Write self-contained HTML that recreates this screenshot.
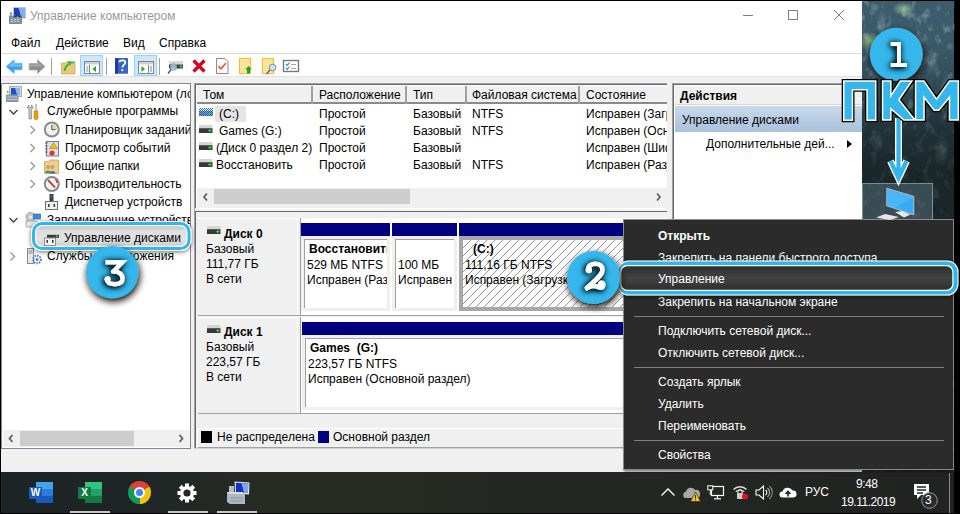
<!DOCTYPE html>
<html><head><meta charset="utf-8">
<style>
*{box-sizing:border-box;margin:0;padding:0}
html,body{width:960px;height:514px;overflow:hidden;background:#000}
body{position:relative;font-family:"Liberation Sans",sans-serif;font-size:12px;color:#000}
.a{position:absolute}
.t{position:absolute;white-space:nowrap;line-height:14px}
.b{font-weight:bold}
#desk{left:1px;top:1px;width:953px;height:472px;background:linear-gradient(180deg,#3d5d6e 0%,#3a5868 10%,#2e4853 19%,#21343a 26%,#1a2629 36%,#1c2729 100%)}
#win{left:1px;top:1px;width:861px;height:471px;background:#fff;overflow:hidden}
#taskbar{left:1px;top:472px;width:953px;height:41px;background:linear-gradient(90deg,#1d2426 0%,#1f2527 12%,#262b23 28%,#242822 55%,#212322 100%)}
#menu{left:623px;top:219px;width:331px;height:251px;background:#2b2b2b;border:1px solid #8a8a8a;color:#fff;box-shadow:1px 2px 2px rgba(0,0,0,.4)}
.panel{position:absolute;background:#fff;border:1px solid #828790;overflow:hidden}
.hdr{position:absolute;top:0;height:18px;background:#f0f0f0;border-right:2px solid #a0a0a0;border-bottom:2px solid #a0a0a0}
.sb{position:absolute;background:#f0f0f0}
.thumb{position:absolute;background:#cdcdcd}
.mi{position:absolute;left:34px;white-space:nowrap;line-height:14px;color:#fff}
.sep{position:absolute;left:10px;width:310px;height:1px;background:#808080}
</style></head><body>
<div id="desk" class="a">
 <div class="a" style="left:861px;top:0;width:92px;height:471px;background:
 radial-gradient(ellipse 12px 7px at 42px 8px,rgba(150,195,140,.9),transparent),
 radial-gradient(ellipse 12px 9px at 8px 40px,rgba(140,185,110,.9),transparent),
 radial-gradient(ellipse 6px 14px at 70px 60px,rgba(150,175,185,.35),transparent),
 radial-gradient(ellipse 5px 12px at 20px 20px,rgba(150,175,185,.35),transparent),
 radial-gradient(ellipse 6px 10px at 85px 85px,rgba(160,190,150,.4),transparent),
 radial-gradient(ellipse 8px 16px at 80px 150px,rgba(110,130,120,.3),transparent),
 radial-gradient(ellipse 8px 12px at 15px 140px,rgba(110,130,120,.25),transparent)"></div>
 <svg class="a" style="left:861px;top:0" width="93" height="471"><defs><filter id="tex" x="0" y="0" width="100%" height="100%"><feTurbulence type="fractalNoise" baseFrequency="0.13 0.09" numOctaves="3" seed="7"/><feColorMatrix type="matrix" values="0 0 0 0 0.75  0 0 0 0 0.85  0 0 0 0 0.8  0 0 0 2.2 -1.15"/></filter><linearGradient id="texfade" x1="0" y1="0" x2="0" y2="1"><stop offset="0" stop-color="#fff" stop-opacity=".5"/><stop offset=".2" stop-color="#fff" stop-opacity=".35"/><stop offset=".32" stop-color="#fff" stop-opacity=".15"/><stop offset=".5" stop-color="#fff" stop-opacity=".12"/></linearGradient><mask id="tm"><rect width="93" height="471" fill="url(#texfade)"/></mask></defs><rect width="93" height="471" filter="url(#tex)" mask="url(#tm)"/></svg>
 <div class="a" style="left:861px;top:182px;width:71px;height:40px;background:rgba(140,175,195,.28);border:1px solid rgba(150,185,205,.6)"></div>
</div>
<div id="win" class="a">
 <!-- title -->
 <svg class="a" style="left:742px;top:9px" width="102" height="12" viewBox="742 9 102 12"><g fill="none" stroke="#808080" stroke-width="1" shape-rendering="crispEdges"><path d="M742 14.5 H752"/><rect x="787.5" y="9.5" width="9" height="9"/></g><path d="M833 9 L843 19 M843 9 L833 19" stroke="#808080" stroke-width="1"/></svg>
 <svg class="a" style="left:8px;top:6px" width="17" height="17" viewBox="0 0 17 17"><rect x="4.5" y="0.5" width="12" height="10.5" fill="#1b3fbf" stroke="#c8c8c0"/><path d="M9.5 1 L16 1 L16 10.5 L12.5 10.5 Z" fill="#7fb2f0"/><rect x="0.5" y="9" width="12" height="7.5" fill="#8796a4" stroke="#6a7884" stroke-width=".8"/><path d="M2 12.5 H11 M2 14.5 H11" stroke="#c8d2da" stroke-width=".9" stroke-dasharray="2 1"/><rect x="1" y="5" width="2" height="4" fill="#aab"/><rect x="1.3" y="6" width="1.3" height="1.2" fill="#3c3"/><path d="M5 10 Q8.5 7.5 12 10" fill="none" stroke="#222" stroke-width="1"/></svg>
 <div class="t" style="left:29px;top:8px;color:#999">Управление компьютером</div>
 <!-- menubar -->
 <div class="t" style="left:10px;top:35px">Файл</div>
 <div class="t" style="left:55px;top:35px">Действие</div>
 <div class="t" style="left:122px;top:35px">Вид</div>
 <div class="t" style="left:158px;top:35px">Справка</div>
 <div class="a" style="left:0;top:52px;width:861px;height:1px;background:#d9d9d9"></div>
 <!-- toolbar highlighted buttons -->
 <div class="a" style="left:79px;top:54px;width:23px;height:21px;background:#cce8ff;border:1px solid #99d1ff"></div>
 <div class="a" style="left:133px;top:54px;width:23px;height:21px;background:#cce8ff;border:1px solid #99d1ff"></div>
 <div class="a" style="left:50px;top:57px;width:1px;height:17px;background:#a0a0a0"></div>
 <div class="a" style="left:105px;top:57px;width:1px;height:17px;background:#a0a0a0"></div>
 <div class="a" style="left:158px;top:57px;width:1px;height:17px;background:#a0a0a0"></div>
 <!-- toolbar icons (abs coords: subtract 1) -->
 <svg class="a" style="left:-1px;top:-1px" width="320" height="80" viewBox="0 0 320 80">
  <!-- back -->
  <path d="M6 66.5 L14.2 59.8 V63.3 H22 V69.8 H14.2 V73.5 Z" fill="#3aa0ec" stroke="#6cc0f5" stroke-width=".8" stroke-linejoin="round"/>
  <path d="M8 66.5 L14.2 61.5 V64.5 H21 V66.5 Z" fill="#8fd0f8" opacity=".7"/>
  <!-- forward -->
  <path d="M45 66.5 L37.5 59.8 V63.5 H29.2 V70 H37.5 V73.5 Z" fill="#8c8c8c" stroke="#a8a8a8" stroke-width=".8" stroke-linejoin="round"/>
  <path d="M43 66.5 L37.5 61.5 V64.5 H30 V66.5 Z" fill="#b4b4b4" opacity=".7"/>
  <!-- folder up -->
  <path d="M61.5 63 H66 L67 61.5 H75 V74 H61.5 Z" fill="#e9c77b" stroke="#c9a55a" stroke-width=".7"/>
  <rect x="70" y="62" width="4" height="1.6" fill="#5aa9e6"/>
  <path d="M63.5 71 C64 67 66 64.5 68.5 63.5 L67 61.5 L72 61.8 L70 66 L69.5 64.8 C67.5 66 66 68.5 65.5 71 Z" fill="#2ec02e"/>
  <!-- window left -->
  <g>
   <rect x="84.5" y="61.5" width="15" height="12" fill="#fff" stroke="#858585" stroke-width="1"/>
   <rect x="85" y="62" width="14" height="2.5" fill="#d0d0d0"/>
   <line x1="89.5" y1="65" x2="89.5" y2="73" stroke="#858585"/>
   <rect x="86.3" y="66.5" width="2" height="1" fill="#4a90d0"/><rect x="86.3" y="68.5" width="2" height="1" fill="#4a90d0"/><rect x="86.3" y="70.5" width="2" height="1" fill="#4a90d0"/>
   <path d="M92.5 69 L96 66 V72 Z" fill="#22a822"/>
  </g>
  <!-- help -->
  <rect x="115" y="58" width="13" height="15.7" fill="#3a63c8"/>
  <rect x="115" y="58" width="3" height="15.7" fill="#1e3c9a"/>
  <path d="M119.3 62.3 C119.3 59.8 125.3 59.8 125.3 62.5 C125.3 64.8 122.3 65 122.3 67.5" fill="none" stroke="#fff" stroke-width="1.8"/>
  <rect x="121.4" y="69.2" width="1.9" height="1.9" fill="#fff"/>
  <!-- window right -->
  <g>
   <rect x="138.5" y="61.5" width="15" height="12" fill="#fff" stroke="#858585" stroke-width="1"/>
   <rect x="139" y="62" width="14" height="2.5" fill="#d0d0d0"/>
   <line x1="148.5" y1="65" x2="148.5" y2="73" stroke="#858585"/>
   <rect x="150" y="66.5" width="2" height="1" fill="#4a90d0"/><rect x="150" y="68.5" width="2" height="1" fill="#4a90d0"/><rect x="150" y="70.5" width="2" height="1" fill="#4a90d0"/>
   <path d="M145 69 L141.5 66 V72 Z" fill="#22a822"/>
  </g>
  <!-- disk magnifier -->
  <rect x="169" y="61" width="14" height="3.5" fill="#d8d8d8"/>
  <rect x="169" y="64.5" width="14" height="4" fill="#3a3a3a"/>
  <path d="M179.5 66.5 H182.5 M181 65 V68" stroke="#2ecc40" stroke-width="1.2"/>
  <circle cx="173.5" cy="67" r="3.3" fill="#b8d4ee" fill-opacity=".8" stroke="#8098b0" stroke-width="1"/>
  <line x1="171" y1="69.5" x2="168" y2="73.5" stroke="#405060" stroke-width="1.3"/>
  <!-- red X -->
  <path d="M193.5 60.5 L204.5 71.5 M204.5 60.5 L193.5 71.5" stroke="#d8001c" stroke-width="3.2"/>
  <!-- doc check -->
  <path d="M216.5 58.5 H225 L228 61.5 V73.5 H216.5 Z" fill="#fafafa" stroke="#8a8a8a" stroke-width="1"/>
  <path d="M218.5 66 L220.8 68.8 L226 63" fill="none" stroke="#f0502a" stroke-width="1.5"/>
  <!-- yellow doc up -->
  <rect x="239.5" y="58.5" width="11" height="15" fill="#fde49b" stroke="#f2c02e" stroke-width="1"/>
  <path d="M248.5 66 L252 69.5 H250 V73.5 H247 V69.5 H245 Z" fill="#1ea51e"/>
  <!-- yellow doc mag -->
  <rect x="262.5" y="58.5" width="11" height="15" fill="#fde49b" stroke="#f2c02e" stroke-width="1"/>
  <circle cx="272.5" cy="67.5" r="3.3" fill="#cfe0f0" stroke="#7a90a6" stroke-width="1"/>
  <line x1="270" y1="70" x2="266.5" y2="74" stroke="#4a6078" stroke-width="1.2"/>
  <!-- checklist -->
  <rect x="283.5" y="60.5" width="15" height="11" fill="#fff" stroke="#7a7a7a" stroke-width="1.4"/>
  <path d="M286 64 L287.3 65.3 L289.5 62.5 M286 68 L287.3 69.3 L289.5 66.5" fill="none" stroke="#2a8ee0" stroke-width="1.1"/>
  <path d="M291 64.5 H296 M291 68.5 H296" stroke="#aaa" stroke-width="1"/>
 </svg>
 <!-- gray body -->
 <div class="a" style="left:0;top:75px;width:861px;height:396px;background:#f0f0f0;border-top:1px solid #e3e3e3"></div>

 <!-- tree panel -->
 <div class="a" style="left:0;top:82px;width:190px;height:366px;background:#fff;border:1px solid #828790;overflow:hidden">
  <div class="t" style="left:25px;top:3px">Управление компьютером (локальным)</div>
  <div class="t" style="left:45px;top:20px">Служебные программы</div>
  <div class="t" style="left:63px;top:39px">Планировщик заданий</div>
  <div class="t" style="left:63px;top:57px">Просмотр событий</div>
  <div class="t" style="left:63px;top:75px">Общие папки</div>
  <div class="t" style="left:63px;top:93px">Производительность</div>
  <div class="t" style="left:63px;top:111px">Диспетчер устройств</div>
  <div class="t" style="left:45px;top:129px">Запоминающие устройства</div>
  <div class="t" style="left:63px;top:147px">Управление дисками</div>
  <div class="t" style="left:45px;top:165px">Службы и приложения</div>
  <svg class="a" style="left:-2px;top:-1px" width="200" height="200" viewBox="0 83 200 200">
   <!-- comp mgmt -->
   <rect x="9.5" y="86.5" width="12" height="10" fill="#d8d8d0" stroke="#b0b0a8" stroke-width="1"/>
   <rect x="11" y="88" width="9" height="7" fill="#1f4fd0"/><path d="M15 88 H20 V95 H17 Z" fill="#8ab8f0"/>
   <rect x="6" y="94.5" width="12.5" height="7.5" fill="#8796a4"/><path d="M7 97 H17.5 M7 99.5 H17.5" stroke="#d0d8e0" stroke-width=".8"/>
   <rect x="7" y="91" width="1.5" height="2" fill="#30d030"/>
   <!-- chevron down -->
   <path d="M9.5 110 L13.5 114 L17.5 110" fill="none" stroke="#404040" stroke-width="1.3"/>
   <!-- tools -->
   <path d="M29 105 C27 106 27 108.5 29 109.5 V119 H31.5 V109.5 C33.5 108.5 33.5 106 31.5 105 V107.5 H29 Z" fill="#c8c8c8" stroke="#808080" stroke-width=".7"/>
   <rect x="35.5" y="104" width="1" height="7" fill="#909090"/>
   <path d="M34.2 111 H37.8 L38 118 C38 120 34 120 34 118 Z" fill="#e8a000" stroke="#b87800" stroke-width=".6"/>
   <!-- chevrons right -->
   <path d="M30.5 126 L34.5 130 L30.5 134 M30.5 144 L34.5 148 L30.5 152 M30.5 162 L34.5 166 L30.5 170 M30.5 180 L34.5 184 L30.5 188" fill="none" stroke="#a0a0a0" stroke-width="1.5"/>
   <!-- clock -->
   <circle cx="51.8" cy="129.5" r="7" fill="#eef2f6" stroke="#8a8a8a" stroke-width="2"/>
   <path d="M51.8 124 A5.7 5.7 0 0 1 57.5 129.7 H51.8 Z" fill="#f0d490"/>
   <path d="M51.8 125 V129.7 H55.5" fill="none" stroke="#505050" stroke-width="1"/>
   <!-- event viewer -->
   <rect x="46.5" y="141.5" width="12" height="14.5" fill="#d8e2f0" stroke="#6a7ea0" stroke-width="1"/>
   <path d="M45 143 H47.5 M45 146 H47.5 M45 149 H47.5 M45 152 H47.5" stroke="#404040" stroke-width=".8"/>
   <path d="M53.5 142.5 L57.5 148.5 H49.5 Z" fill="#f2c000" stroke="#905000" stroke-width=".4"/>
   <circle cx="52" cy="153" r="2.6" fill="#e03030"/>
   <!-- shared folders -->
   <path d="M44.5 161.5 H49 L50 160 H58.5 V173.5 H44.5 Z" fill="#efd08a" stroke="#c8a050" stroke-width=".8"/>
   <circle cx="48" cy="167" r="2" fill="#d09a70"/><path d="M45 173 C45 169.5 51 169.5 51 173 Z" fill="#30a060"/>
   <circle cx="52.5" cy="167" r="2" fill="#d09a70"/><path d="M49.5 173.5 C49.5 170 55.5 170 55.5 173.5 Z" fill="#3070c0"/>
   <!-- performance -->
   <circle cx="51.8" cy="184" r="7" fill="#f4f4f4" stroke="#8a8a8a" stroke-width="2"/>
   <path d="M48 180 L55 187.5" stroke="#d02020" stroke-width="1.8"/>
   <path d="M55.5 179.5 A5 5 0 0 1 57 183" fill="none" stroke="#d02020" stroke-width="1.2"/>
   <!-- device manager -->
   <rect x="49.5" y="194" width="4" height="7" fill="#404040"/><rect x="51" y="195.5" width="1.2" height="1.2" fill="#30d030"/>
   <rect x="45.5" y="201.5" width="12" height="8" fill="#f0f0f0" stroke="#707070" stroke-width="1"/>
   <rect x="48" y="204" width="1.6" height="3" fill="#404040"/><rect x="53.5" y="204" width="1.6" height="3" fill="#404040"/>
   <!-- chevron down storage -->
   <path d="M9.5 218 L13.5 222 L17.5 218" fill="none" stroke="#404040" stroke-width="1.3"/>
   <!-- storage -->
   <circle cx="30.5" cy="217" r="4.6" fill="#c8c8c8" stroke="#909090" stroke-width=".7"/><circle cx="30.5" cy="217" r="1.2" fill="#fff"/>
   <rect x="33.5" y="214" width="7" height="5" fill="#3a8ae0" stroke="#1a5ab0" stroke-width=".6"/>
   <rect x="26" y="221" width="11" height="6" fill="#e8e8e8" stroke="#909090" stroke-width=".7"/>
   <!-- services -->
   <path d="M10.5 252.5 L14.5 256.5 L10.5 260.5" fill="none" stroke="#a0a0a0" stroke-width="1.5"/>
   <rect x="27.5" y="248.5" width="6" height="15" fill="#e8e8e8" stroke="#8a8a8a" stroke-width="1"/>
   <path d="M28.5 251 H32.5 M28.5 253 H32.5" stroke="#707070" stroke-width=".8"/>
   <circle cx="37" cy="259.5" r="3.8" fill="none" stroke="#4a80c8" stroke-width="2" stroke-dasharray="1.5 1"/>
   <circle cx="37" cy="259.5" r="1.5" fill="#4a80c8"/>
  </svg>
  <div class="a" style="left:1px;top:346px;width:187px;height:17px;background:#f0f0f0"></div>
  <svg class="a" style="left:1px;top:346px" width="187" height="17" viewBox="0 0 187 17"><path d="M9.5 5 L6.5 8.5 L9.5 12 M176.5 5 L179.5 8.5 L176.5 12" fill="none" stroke="#606060" stroke-width="1.8"/></svg>
  <div class="a" style="left:18px;top:347px;width:114px;height:15px;background:#cdcdcd"></div>
 </div>
 <!-- center -->
 <div class="a" style="left:193px;top:82px;width:473px;height:366px;background:#f0f0f0;border-left:1px solid #a0a0a0;border-top:1px solid #a0a0a0;overflow:hidden">
  <div class="a" style="left:0;top:0;width:474px;height:124px;background:#fff;border-left:1px solid #696969;border-top:1px solid #696969">
   <div class="a" style="left:1px;top:1px;width:472px;height:18px;background:#f0f0f0;border-bottom:2px solid #8a8a8a"></div>
   <div class="a" style="left:115px;top:1px;width:2px;height:18px;background:#a0a0a0"></div>
   <div class="a" style="left:209px;top:1px;width:2px;height:18px;background:#a0a0a0"></div>
   <div class="a" style="left:269px;top:1px;width:2px;height:18px;background:#a0a0a0"></div>
   <div class="a" style="left:382px;top:1px;width:2px;height:18px;background:#a0a0a0"></div>
   <div class="t" style="left:7px;top:3px">Том</div>
   <div class="t" style="left:123px;top:3px">Расположение</div>
   <div class="t" style="left:217px;top:3px">Тип</div>
   <div class="t" style="left:276px;top:3px">Файловая система</div>
   <div class="t" style="left:390px;top:3px">Состояние</div>
   <div class="a" style="left:19px;top:21px;width:31px;height:16px;background:#e5e5e5"></div>
   <div class="t" style="left:23px;top:22px">(C:)</div>
   <div class="t" style="left:23px;top:39px">Games (G:)</div>
   <div class="t" style="left:20px;top:56px">(Диск 0 раздел 2)</div>
   <div class="t" style="left:20px;top:73px">Восстановить</div>
   <div class="t" style="left:123px;top:22px">Простой</div>
   <div class="t" style="left:123px;top:39px">Простой</div>
   <div class="t" style="left:123px;top:56px">Простой</div>
   <div class="t" style="left:123px;top:73px">Простой</div>
   <div class="t" style="left:217px;top:22px">Базовый</div>
   <div class="t" style="left:217px;top:39px">Базовый</div>
   <div class="t" style="left:217px;top:56px">Базовый</div>
   <div class="t" style="left:217px;top:73px">Базовый</div>
   <div class="t" style="left:276px;top:22px">NTFS</div>
   <div class="t" style="left:276px;top:39px">NTFS</div>
   <div class="t" style="left:276px;top:73px">NTFS</div>
   <div class="t" style="left:390px;top:22px">Исправен (Загрузка, Файл подкачки)</div>
   <div class="t" style="left:390px;top:39px">Исправен (Основной раздел)</div>
   <div class="t" style="left:390px;top:56px">Исправен (Шифрованный (EFI))</div>
   <div class="t" style="left:390px;top:73px">Исправен (Раздел восстановления)</div>
   <svg class="a" style="left:-196px;top:-85px" width="240" height="200" viewBox="0 0 240 200">
    <defs><pattern id="dith" width="2" height="2" patternUnits="userSpaceOnUse"><rect width="1" height="1" fill="#1a6fd8"/><rect x="1" y="1" width="1" height="1" fill="#1a6fd8"/></pattern></defs>
    <rect x="199" y="108" width="14" height="8" fill="url(#dith)"/>
    <rect x="199" y="111" width="14" height="5" fill="#1a4a90" opacity=".5"/>
    <circle cx="209.5" cy="113.5" r="1" fill="#2ecc40"/>
    <g id="drv">
     <rect x="199" y="125" width="13.5" height="3.2" rx=".8" fill="#d6d6d6"/>
     <rect x="199" y="128.2" width="13.5" height="4.8" fill="#383838"/>
     <path d="M208.2 130.6 H211.6 M209.9 128.9 V132.3" stroke="#2ed040" stroke-width="1.1"/>
    </g>
    <use href="#drv" y="17"/>
    <use href="#drv" y="34"/>
   </svg>
   <div class="a" style="left:1px;top:103px;width:472px;height:20px;background:#f0f0f0"></div>
   <svg class="a" style="left:1px;top:103px" width="472" height="20" viewBox="0 0 472 20"><path d="M10 5.5 L7 9 L10 12.5 M460 5.5 L463 9 L460 12.5" fill="none" stroke="#606060" stroke-width="1.8"/></svg>
   <div class="a" style="left:18px;top:104px;width:196px;height:15px;background:#cdcdcd"></div>
   <div class="a" style="left:1px;top:123px;width:472px;height:1px;background:#fff"></div>
  </div>
  <!-- disk panel -->
  <div class="a" style="left:0;top:127px;width:474px;height:238px;background:#f0f0f0;border-left:1px solid #696969;border-top:1px solid #696969">
   <!-- disk 0 -->
   <div class="a" style="left:2px;top:6px;width:100px;height:98px;background:#f0f0f0;border-top:1px solid #fff;border-right:1px solid #fff"></div>
   <div class="t b" style="left:28px;top:15px">Диск 0</div>
   <div class="t" style="left:10px;top:30px">Базовый</div>
   <div class="t" style="left:10px;top:45px">111,77 ГБ</div>
   <div class="t" style="left:10px;top:60px">В сети</div>
   <div class="a" style="left:104px;top:6px;width:370px;height:98px;background:#fff;border-left:1px solid #a0a0a0"></div>
   <div class="a" style="left:105px;top:11px;width:89px;height:13px;background:#000080"></div>
   <div class="a" style="left:196px;top:11px;width:65px;height:13px;background:#000080"></div>
   <div class="a" style="left:263px;top:11px;width:211px;height:13px;background:#000080"></div>
   <div class="a" style="left:105px;top:24px;width:89px;height:75px;background:#fff;border:3px solid #f0f0f0"><div class="a" style="left:0;top:0;width:83px;height:69px;border-left:1px solid #a0a0a0;border-top:1px solid #a0a0a0"></div></div>
   <div class="a" style="left:196px;top:24px;width:65px;height:75px;background:#fff;border:3px solid #f0f0f0"><div class="a" style="left:0;top:0;width:59px;height:69px;border-left:1px solid #a0a0a0;border-top:1px solid #a0a0a0"></div></div>
   <div class="a" style="left:263px;top:24px;width:211px;height:75px;background:#a8a8a8;padding:4px"><svg width="207" height="67" style="display:block"><defs><pattern id="hatch" width="8" height="8" patternUnits="userSpaceOnUse"><path d="M-1 9 L9 -1 M-5 5 L5 -5 M3 13 L13 3" stroke="#8c8c8c" stroke-width=".9"/></pattern></defs><rect width="207" height="67" fill="#fff"/><rect width="207" height="67" fill="url(#hatch)"/></svg></div>
   <div class="a" style="left:109px;top:28px;width:82px;height:60px;overflow:hidden">
    <div class="t b" style="left:4px;top:2px">Восстановить</div>
    <div class="t" style="left:2px;top:18px">529 МБ NTFS</div>
    <div class="t" style="left:2px;top:33px">Исправен (Раздел восстановления)</div>
   </div>
   <div class="a" style="left:200px;top:28px;width:58px;height:60px;overflow:hidden">
    <div class="t" style="left:2px;top:18px">100 МБ</div>
    <div class="t" style="left:2px;top:33px">Исправен (Шифрованный (EFI) системный раздел)</div>
   </div>
   <div class="a" style="left:267px;top:28px;width:200px;height:60px;overflow:hidden">
    <div class="t b" style="left:10px;top:2px">(C:)</div>
    <div class="t" style="left:2px;top:18px">111,16 ГБ NTFS</div>
    <div class="t" style="left:2px;top:33px">Исправен (Загрузка, Файл подкачки, Аварийный дамп, Основной раздел)</div>
   </div>
   <div class="a" style="left:2px;top:103px;width:472px;height:1px;background:#a0a0a0"></div>
   <!-- disk 1 -->
   <div class="a" style="left:2px;top:105px;width:100px;height:96px;background:#f0f0f0;border-top:1px solid #fff;border-right:1px solid #fff"></div>
   <svg class="a" style="left:-196px;top:-212px" width="240" height="340" viewBox="0 0 240 340">
    <use href="#drv" x="8" y="101"/>
    <use href="#drv" x="8" y="200"/>
   </svg>
   <div class="t b" style="left:28px;top:113px">Диск 1</div>
   <div class="t" style="left:10px;top:128px">Базовый</div>
   <div class="t" style="left:10px;top:143px">223,57 ГБ</div>
   <div class="t" style="left:10px;top:158px">В сети</div>
   <div class="a" style="left:104px;top:105px;width:370px;height:96px;background:#fff;border-left:1px solid #a0a0a0"></div>
   <div class="a" style="left:106px;top:110px;width:368px;height:13px;background:#000080"></div>
   <div class="a" style="left:106px;top:123px;width:368px;height:75px;background:#fff;border:3px solid #f0f0f0"><div class="a" style="left:0;top:0;width:362px;height:69px;border-left:1px solid #a0a0a0;border-top:1px solid #a0a0a0"></div></div>
   <div class="a" style="left:110px;top:127px;width:300px;height:60px;overflow:hidden">
    <div class="t b" style="left:4px;top:2px">Games&nbsp; (G:)</div>
    <div class="t" style="left:2px;top:18px">223,57 ГБ NTFS</div>
    <div class="t" style="left:2px;top:33px">Исправен (Основной раздел)</div>
   </div>
   <div class="a" style="left:2px;top:201px;width:472px;height:1px;background:#a0a0a0"></div>
   <!-- legend -->
   <div class="a" style="left:1px;top:216px;width:473px;height:20px;background:#f0f0f0;border-top:1px solid #fff;border-left:1px solid #fff;border-bottom:1px solid #a0a0a0"></div>
   <div class="a" style="left:5px;top:219px;width:11px;height:12px;background:#000"></div>
   <div class="t" style="left:21px;top:218px">Не распределена</div>
   <div class="a" style="left:122px;top:219px;width:11px;height:12px;background:#000080"></div>
   <div class="t" style="left:137px;top:218px">Основной раздел</div>
  </div>
 </div>
 <div class="a" style="left:193px;top:447px;width:474px;height:1px;background:#d2d2d2"></div>
 <!-- actions panel -->
 <div class="a" style="left:671px;top:82px;width:191px;height:366px;background:#fff;border-left:1px solid #a0a0a0;border-top:1px solid #a0a0a0">
  <div class="a" style="left:0;top:0;width:190px;height:365px;border-left:1px solid #696969;border-top:1px solid #696969">
   <div class="a" style="left:1px;top:1px;width:188px;height:19px;background:#f0f0f0;border-bottom:1px solid #d5d5d5"></div>
   <div class="t b" style="left:6px;top:4px">Действия</div>
   <div class="a" style="left:1px;top:21px;width:188px;height:26px;background:linear-gradient(#c9d9ea,#a9c1dc)"></div>
   <div class="t" style="left:8px;top:28px">Управление дисками</div>
   <div class="t" style="left:32px;top:52px">Дополнительные дей...</div>
   <div class="a" style="left:173px;top:55px;width:0;height:0;border-top:4px solid transparent;border-bottom:4px solid transparent;border-left:5px solid #000"></div>
  </div>
 </div>
</div>
<div id="taskbar" class="a">
 <!-- word -->
 <div class="a" style="left:35px;top:10px;width:17px;height:21px;background:linear-gradient(#41a5ee 0,#41a5ee 33%,#2b7cd3 33%,#2b7cd3 66%,#185abd 66%)"></div>
 <div class="a" style="left:28px;top:15px;width:13px;height:12px;background:#185abd;color:#fff;font-weight:bold;font-size:10px;line-height:12px;text-align:center">W</div>
 <!-- excel -->
 <div class="a" style="left:84px;top:10px;width:17px;height:21px;background:linear-gradient(#33c481 0,#33c481 33%,#21a366 33%,#21a366 66%,#107c41 66%)"></div>
 <div class="a" style="left:77px;top:15px;width:13px;height:12px;background:#107c41;color:#fff;font-weight:bold;font-size:10px;line-height:12px;text-align:center">X</div>
 <div class="a" style="left:69px;top:39px;width:40px;height:2px;background:#c8c8c8"></div>
 <!-- chrome -->
 <div class="a" style="left:127px;top:9px;width:23px;height:23px;border-radius:50%;background:conic-gradient(from -60deg,#db4437 0 120deg,#f4c20d 120deg 240deg,#0f9d58 240deg 360deg)"></div>
 <div class="a" style="left:133px;top:15px;width:11px;height:11px;border-radius:50%;background:#4285f4;border:2px solid #fff"></div>
 <!-- gear -->
 <svg class="a" style="left:176px;top:11px" width="20" height="20" viewBox="0 0 20 20"><g fill="#fff"><circle cx="10" cy="10" r="7"/><rect x="8" y="0.5" width="4" height="4"/><rect x="8" y="15.5" width="4" height="4"/><rect x="0.5" y="8" width="4" height="4"/><rect x="15.5" y="8" width="4" height="4"/><rect x="8" y="0.5" width="4" height="4" transform="rotate(45 10 10)"/><rect x="8" y="15.5" width="4" height="4" transform="rotate(45 10 10)"/><rect x="0.5" y="8" width="4" height="4" transform="rotate(45 10 10)"/><rect x="15.5" y="8" width="4" height="4" transform="rotate(45 10 10)"/></g><circle cx="10" cy="10" r="3.6" fill="#232826"/></svg>
 <div class="a" style="left:167px;top:39px;width:40px;height:2px;background:#c8c8c8"></div>
 <svg class="a" style="left:223px;top:8px" width="28" height="26" viewBox="222 480 28 26">
  <path d="M232.5 481.5 L247.5 482.5 L247 494.5 L233 493.5 Z" fill="#e0e4e8"/>
  <path d="M233.8 482.8 L246.3 483.6 L245.9 493 L234 492.2 Z" fill="#1a30c0"/>
  <path d="M239.5 483.2 L246.3 483.6 L245.9 493 L242 492.7 Z" fill="#7aa8f0"/>
  <rect x="227" y="486" width="5" height="8" fill="#b8bec4"/>
  <path d="M225 492 H240 L243 494 V504 H228 L225 502 Z" fill="#aeb8c2"/>
  <path d="M225 492 H240 L243 494 H228 Z" fill="#d8dee4"/>
  <path d="M229 498 H240 M229 501 H240" stroke="#8a96a2" stroke-width="1"/>
 </svg>
 <div class="a" style="left:216px;top:39px;width:40px;height:2px;background:#c8c8c8"></div>
 <!-- tray -->
 <svg class="a" style="left:659px;top:15px" width="16" height="10" viewBox="0 0 16 10"><path d="M1.5 8.5 L8 2 L14.5 8.5" fill="none" stroke="#fff" stroke-width="1.3"/></svg>
 <svg class="a" style="left:681px;top:14px" width="20" height="16" viewBox="0 0 20 16"><path d="M3 12 A3.5 3.5 0 0 1 4 5.5 A5 5 0 0 1 13 4 A4 4 0 0 1 18 9 A3 3 0 0 1 16 12 Z" fill="#a8a8a8"/><path d="M13.5 6 L18.5 15.5 L8.5 15.5 Z" fill="#f0c419" stroke="#222" stroke-width=".6"/><rect x="13" y="9" width="1" height="3.5" fill="#222"/><rect x="13" y="13.3" width="1" height="1" fill="#222"/></svg>
 <svg class="a" style="left:706px;top:13px" width="18" height="15" viewBox="0 0 18 15"><rect x="4.5" y="1.5" width="12" height="9" fill="none" stroke="#fff" stroke-width="1.2"/><line x1="10.5" y1="10.5" x2="10.5" y2="13.5" stroke="#fff" stroke-width="1.2"/><line x1="7" y1="13.8" x2="14" y2="13.8" stroke="#fff" stroke-width="1.2"/><rect x="0.8" y="0.8" width="5" height="4" fill="#1f2527" stroke="#fff" stroke-width="1"/><line x1="3.3" y1="5" x2="3.3" y2="10" stroke="#fff" stroke-width="1"/></svg>
 <svg class="a" style="left:731px;top:12px" width="18" height="16" viewBox="0 0 18 16"><path d="M1.5 5.5 A9 9 0 0 1 14.5 5.5 M3.8 7.8 A6 6 0 0 1 12.2 7.8" fill="none" stroke="#ddd" stroke-width="1.4"/><rect x="5" y="9" width="6" height="6" fill="#ccc"/><path d="M6 9 V7.5 A2 2 0 0 1 10 7.5 V9" fill="none" stroke="#ccc" stroke-width="1.2"/><circle cx="13" cy="12.5" r="3" fill="#e81123"/></svg>
 <svg class="a" style="left:754px;top:13px" width="18" height="15" viewBox="0 0 18 15"><path d="M1 5 H4 L8.5 1 V14 L4 10 H1 Z" fill="none" stroke="#fff" stroke-width="1.1"/><path d="M10.5 5 A3 3 0 0 1 10.5 10" fill="none" stroke="#fff" stroke-width="1.1"/><path d="M12.5 3 A6 6 0 0 1 12.5 12" fill="none" stroke="#aaa" stroke-width="1.1"/><path d="M14.5 1 A9 9 0 0 1 14.5 14" fill="none" stroke="#888" stroke-width="1.1"/></svg>
 <svg class="a" style="left:778px;top:14px" width="18" height="12" viewBox="0 0 18 12"><path d="M3.5 11.5 A3 3 0 0 1 3.5 5.5 A5.5 5.5 0 0 1 13.5 4.5 A3.5 3.5 0 0 1 14.5 11.5 Z" fill="#fff"/><path d="M9 10.5 V5.5 M6.5 8 L9 5.5 L11.5 8" fill="none" stroke="#1f2527" stroke-width="1.6"/></svg>
 <div class="t" style="left:804px;top:13px;color:#fff">РУС</div>
 <div class="t" style="left:855px;top:5px;color:#fff;letter-spacing:-.5px">9:48</div>
 <div class="t" style="left:840px;top:23px;color:#fff;letter-spacing:-.5px">19.11.2019</div>
 <svg class="a" style="left:912px;top:11px" width="26" height="26" viewBox="0 0 26 26"><path d="M1 1 H16 V12 H8 L4 16 V12 H1 Z" fill="#fff"/><path d="M4 4 H13 M4 7 H13 M4 10 H10" stroke="#1f2527" stroke-width="1.3"/><circle cx="16.5" cy="17.5" r="7.8" fill="#2b2b2b" stroke="#999" stroke-width="1"/></svg>
 <div class="t" style="left:924px;top:21px;color:#fff;font-size:12px">3</div>
 <div class="a" style="left:948px;top:1px;width:1px;height:40px;background:#8a8a8a"></div>
</div>
<div id="menu" class="a">
 <div class="mi b" style="top:9px">Открыть</div>
 <div class="mi" style="top:31px">Закрепить на панели быстрого доступа</div>
 <div class="mi" style="top:53px">Управление</div>
 <div class="mi" style="top:75px">Закрепить на начальном экране</div>
 <div class="sep" style="top:96px"></div>
 <div class="mi" style="top:104px">Подключить сетевой диск...</div>
 <div class="mi" style="top:126px">Отключить сетевой диск...</div>
 <div class="sep" style="top:147px"></div>
 <div class="mi" style="top:155px">Создать ярлык</div>
 <div class="mi" style="top:177px">Удалить</div>
 <div class="mi" style="top:199px">Переименовать</div>
 <div class="sep" style="top:220px"></div>
 <div class="mi" style="top:228px">Свойства</div>
</div>
<!-- annotations -->
<svg class="a" style="left:0;top:0" width="960" height="514" viewBox="0 0 960 514">
 <defs>
  <filter id="sh" x="-50%" y="-50%" width="200%" height="200%"><feGaussianBlur in="SourceAlpha" stdDeviation="3.5" result="b"/><feOffset in="b" dx="1" dy="2.5" result="o"/><feFlood flood-color="#1e140a"/><feComposite operator="in" in2="o" result="s"/><feComponentTransfer in="s" result="s2"><feFuncA type="linear" slope="1.1"/></feComponentTransfer><feMerge><feMergeNode in="s2"/><feMergeNode in="SourceGraphic"/></feMerge></filter>
  <filter id="gsh" x="-80%" y="-80%" width="260%" height="260%"><feGaussianBlur in="SourceAlpha" stdDeviation="2.2"/><feComponentTransfer><feFuncA type="linear" slope="1.4"/></feComponentTransfer><feFlood flood-color="#06222e"/><feComposite operator="in" in2="SourceAlpha"/></filter>
  <filter id="hsh" x="-20%" y="-50%" width="140%" height="200%"><feGaussianBlur in="SourceAlpha" stdDeviation="2"/><feOffset dx="0" dy="1"/><feComponentTransfer><feFuncA type="linear" slope="0.6"/></feComponentTransfer><feMerge><feMergeNode/><feMergeNode in="SourceGraphic"/></feMerge></filter>
  <linearGradient id="tg" x1="0" y1="0" x2="0" y2="1"><stop offset="0" stop-color="#c4c4c4"/><stop offset=".25" stop-color="#dfdfdf"/><stop offset=".7" stop-color="#e2e2e2"/><stop offset="1" stop-color="#cdcdcd"/></linearGradient>
  <linearGradient id="mg" x1="0" y1="0" x2="0" y2="1"><stop offset="0" stop-color="#2e2e2e"/><stop offset=".5" stop-color="#434343"/><stop offset="1" stop-color="#2f2f2f"/></linearGradient>
 </defs>
 <!-- desktop computer icon -->
 <g>
  <path d="M886.8 188.3 L913.8 196.4 L913.8 214.8 L886.8 205.8 Z" fill="#35acf4" stroke="#c8d4dc" stroke-width=".8"/>
  <path d="M887.5 189.5 L913 197 L895 208 L887.5 205.5 Z" fill="#5dc0fa" opacity=".55"/>
  <path d="M895 212 L902 211 L910.5 214.5 L904 217.5 Z" fill="#e4e8ea"/>
  <path d="M876 217.5 L885 214 L899 217 L890 220 Z" fill="#e6e6e6"/>
 </g>
 <!-- arrow -->
 <g fill="none" stroke-linejoin="miter">
  <path d="M898.5 118 V175 M890.5 161 L898.5 178 L906.5 161" stroke="#fff" stroke-width="7"/>
  <path d="M898.5 118 V175 M890.5 161 L898.5 178 L906.5 161" stroke="#33b5ea" stroke-width="4.2"/>
 </g>
 <!-- tree highlight -->
 <g filter="url(#hsh)">
  <rect x="31" y="221" width="160.5" height="30" rx="11" fill="#fff"/>
  <rect x="32" y="222" width="158.5" height="28" rx="10" fill="#33b5ea"/>
  <rect x="35" y="225" width="152.5" height="22" rx="7" fill="#fff"/>
  <rect x="36.3" y="226.3" width="150" height="19.4" rx="6" fill="url(#tg)"/>
 </g>
 <!-- menu highlight -->
 <g filter="url(#hsh)">
  <rect x="617.3" y="260.5" width="341.2" height="35" rx="11.5" fill="#fff"/>
  <rect x="618.3" y="261.5" width="339.2" height="33" rx="10.5" fill="#33b5ea"/>
  <rect x="620" y="265" width="333.5" height="26" rx="7" fill="#fff"/>
  <rect x="621.3" y="266.3" width="331" height="23.4" rx="6" fill="url(#mg)"/>
 </g>
 <!-- badges -->
 <g filter="url(#sh)"><circle cx="896.3" cy="54.2" r="26.5" fill="#35b7ec"/></g>
 <g filter="url(#sh)"><circle cx="593.5" cy="277.5" r="26.5" fill="#35b7ec"/></g>
 <g filter="url(#sh)"><circle cx="112.4" cy="272.3" r="26.3" fill="#35b7ec"/></g>
</svg>
<div class="t" style="left:658px;top:272px;color:#fff">Управление</div>
<div class="t" style="left:64px;top:231px">Управление дисками</div>
<svg class="a" style="left:44px;top:234px" width="16" height="12" viewBox="0 0 16 12"><rect x="3" y="0.8" width="12" height="3" fill="#3a3a3a"/><circle cx="12.8" cy="2.3" r="1" fill="#2ee82e"/><rect x="0.5" y="4" width="11" height="7.5" fill="#f4f4f4" stroke="#7a7a7a" stroke-width=".8"/><rect x="2.5" y="6" width="1.5" height="2.8" fill="#333"/><rect x="8" y="6" width="1.5" height="2.8" fill="#333"/></svg>
<svg class="a" style="left:0;top:0" width="960" height="514" viewBox="0 0 960 514">
 <defs>
  <filter id="gsh2" x="-80%" y="-80%" width="260%" height="260%"><feGaussianBlur in="SourceAlpha" stdDeviation="3" result="b0"/><feOffset in="b0" dx="-1" dy="1" result="b1"/><feComponentTransfer in="b1" result="b"><feFuncA type="linear" slope="2.2"/></feComponentTransfer><feFlood flood-color="#073445" flood-opacity="1"/><feComposite operator="in" in2="b" result="s"/><feMerge><feMergeNode in="s"/><feMergeNode in="SourceGraphic"/></feMerge></filter>
 </defs>
 <!-- PKM -->
 <g stroke-linejoin="miter" stroke-miterlimit="8">
  <path id="pkm" d="M844.5 119.5 V81.8 H875 V119.5 H867.8 V88.9 H851.7 V119.5 Z M883.3 119.3 V81.8 H890.1 V98.4 L900.8 81.8 H910.5 L897.9 99.8 L913.4 119.3 H904.2 L890.1 107.1 V119.3 Z M916.3 119.3 V81.8 H923.5 L936.5 100.5 L949.9 81.8 H957.6 V119.3 H950.2 V95 L938.5 109.5 H934.5 L923.3 95 V119.3 Z" fill="#000" stroke="#000" stroke-width="5.6"/>
  <path d="M844.5 119.5 V81.8 H875 V119.5 H867.8 V88.9 H851.7 V119.5 Z M883.3 119.3 V81.8 H890.1 V98.4 L900.8 81.8 H910.5 L897.9 99.8 L913.4 119.3 H904.2 L890.1 107.1 V119.3 Z M916.3 119.3 V81.8 H923.5 L936.5 100.5 L949.9 81.8 H957.6 V119.3 H950.2 V95 L938.5 109.5 H934.5 L923.3 95 V119.3 Z" fill="#fff" stroke="#fff" stroke-width="3"/>
  <path d="M844.5 119.5 V81.8 H875 V119.5 H867.8 V88.9 H851.7 V119.5 Z M883.3 119.3 V81.8 H890.1 V98.4 L900.8 81.8 H910.5 L897.9 99.8 L913.4 119.3 H904.2 L890.1 107.1 V119.3 Z M916.3 119.3 V81.8 H923.5 L936.5 100.5 L949.9 81.8 H957.6 V119.3 H950.2 V95 L938.5 109.5 H934.5 L923.3 95 V119.3 Z" fill="#35b7ec"/>
 </g>
 <g filter="url(#gsh2)">
  <!-- 1 -->
  <path d="M890.8 42 H900.8 V63 H907 V67 H890.8 V63 H897 V46 H890.8 Z" fill="#fff"/>
  <!-- 2 -->
  <g fill="none" stroke="#fff" stroke-width="4.6" stroke-linecap="round" stroke-linejoin="round">
   <path d="M588.5 269.5 C588 265.5 591.5 263.8 595.5 263.8 C600.5 263.8 602.5 266.8 602.5 270 C602.5 275 596 279.5 587 288"/>
   <path d="M587 288 C591 285.5 595.5 285.8 598.5 287.2 C601.3 288.5 603.3 287.2 603.3 284.7 C603.3 282.8 601.5 282.2 600.3 283.5"/>
  </g>
  <circle cx="588.8" cy="270" r="3.2" fill="#fff"/>
  <!-- 3 -->
  <g fill="none" stroke="#fff" stroke-width="4.4" stroke-linejoin="miter">
   <path d="M105.5 262.2 H122.5 L113.5 271.6"/>
   <path d="M113 271.6 C119.5 271.4 122.6 274.5 122.6 278.6 C122.6 282.6 119.2 284.2 115 284.2 C110 284.2 107 282.2 106.8 279.2" stroke-linecap="round"/>
  </g>
  <circle cx="107.6" cy="279.2" r="3" fill="#fff"/>
 </g>
</svg>
</body></html>
